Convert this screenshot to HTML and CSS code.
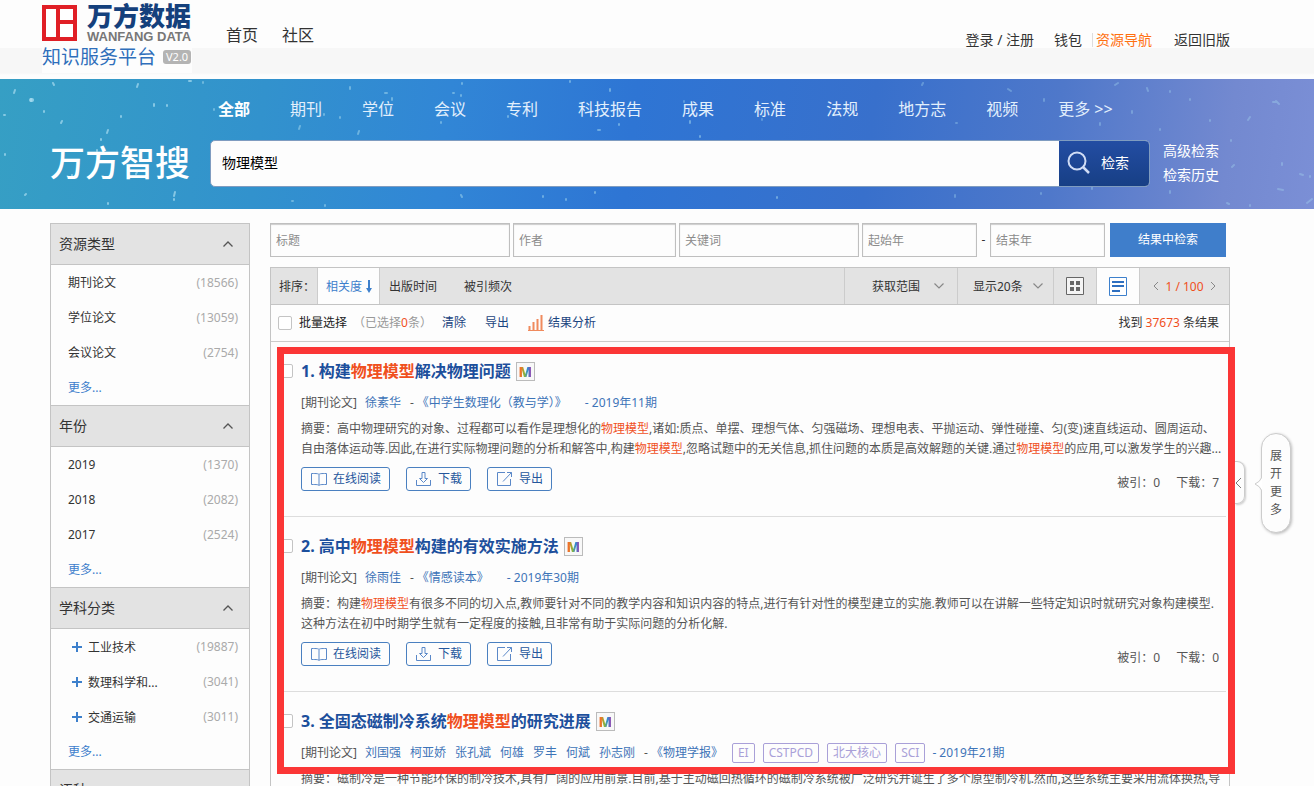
FILE: index.html
```html
<!DOCTYPE html>
<html lang="zh-CN">
<head>
<meta charset="utf-8">
<title>万方数据知识服务平台</title>
<link rel="stylesheet" href="styles.css">
</head>
<body>
<svg class="sprite" aria-hidden="true">
  <symbol id="up" viewBox="0 0 12 8"><path d="M1.500 6.500 6 2l4.500 4.500" fill="none" stroke="#555" stroke-width="1.300"/></symbol>
  <symbol id="down" viewBox="0 0 12 8"><path d="M1.500 1.500 6 6l4.500-4.500" fill="none" stroke="currentColor" stroke-width="1.200"/></symbol>
  <symbol id="book" viewBox="0 0 18 16"><path d="M9 3.500C8 2.500 7 2.500 1.500 2.500v11c5.500 0 6.500 0 7.500 1 1-1 2-1 7.500-1v-11C11 2.500 10 2.500 9 3.500zM9 3.500v11" fill="none" stroke="currentColor"/></symbol>
  <symbol id="save" viewBox="0 0 18 16"><path d="M1.500 9v5.500h14V9M7 1.500h3v6h2.500l-4 4-4-4H7z" fill="none" stroke="currentColor"/></symbol>
  <symbol id="share" viewBox="0 0 18 16"><path d="M9 1.500H1.500v13h13V8M11 1.500h4.500V6M15.500 1.500l-8.500 9" fill="none" stroke="currentColor"/></symbol>
</svg>

<header class="top">
  <a class="logo" href="#">
    <span class="logo-row">
      <svg width="35" height="36" viewBox="0 0 35 36"><path fill="#e01f26" d="M0 0h35v36H0z"/><path fill="#fff" d="M4 4h10v28H4zM18 4h13v11H18zM18 19h13v13H18z"/></svg>
      <span class="logo-name"><span class="logo-cn">万方数据</span><span class="logo-en">WANFANG DATA</span></span>
    </span>
    <span class="logo-row logo-sub">知识服务平台<span class="version">V2.0</span></span>
  </a>
  <nav class="site-nav"><a href="#">首页</a><a href="#">社区</a></nav>
  <nav class="user-nav"><a href="#">登录 / 注册</a><a href="#">钱包</a><a class="nav-guide" href="#">资源导航</a><a href="#">返回旧版</a></nav>
</header>

<section class="banner">
  <svg class="stars" viewBox="0 0 1314 130" preserveAspectRatio="none" aria-hidden="true">
    <g stroke="#a8dcf0" stroke-linecap="round" stroke-width="2" fill="none">
      <path opacity=".7" d="M15 11l-1 3M53 4l1 2M31 20v2M4 36h1M44 32v1M138 5l-1 3M189 2h2M154 25v2M121 37v1M62 42l-1 2M167 26v1M108 51l-1 3M101 60v1M97 71v1M25 116l1-1M175 113l-1 4M174 120v1M108 124v1M5 75v1M137 93l-1 2M72 96v1"/>
      <path stroke-width="4" opacity=".8" d="M31 21l1 0"/>
      <path opacity=".5" d="M203 3v1M214 30v1M300 47l-1 3M350 8v2M359 52l-1 3M385 14h2M392 19v2M324 35v1M369 30v1M462 4v1M453 14h1M441 43v1M461 16v1M570 2v1M610 10v2M598 51h2M619 45v1M690 42v2M700 57v1M461 116l1 2M325 126v1M292 122h1M566 120v1M595 113v1M777 118v1M543 117v1M508 37v1M340 38v1"/>
      <path opacity=".35" d="M684 22v1M762 40v1M923 4l-1 2M956 44h1M1008 10l3 2M1044 20v2M1118 4l-3 2M1170 12v1M1147 9l1 3M1132 32v2M1100 44v2M1210 41v1M1231 61v1M1234 86l-2 2M1273 23h3M1276 22l3 3M1250 38l-2 3M1282 84v2M1300 95l3 1M1278 110l5 1M1307 124l5-4M1227 124l2 1M1092 108v2M1170 112v2M955 116v2M1250 126v1M1041 114v1M1310 97v1M1190 20v1M1160 50v1"/>
    </g>
  </svg>
  <div class="banner-inner">
    <nav class="tabs"><a class="on" href="#">全部</a><a href="#">期刊</a><a href="#">学位</a><a href="#">会议</a><a href="#">专利</a><a href="#">科技报告</a><a href="#">成果</a><a href="#">标准</a><a href="#">法规</a><a href="#">地方志</a><a href="#">视频</a><a href="#">更多 &gt;&gt;</a></nav>
    <div class="search-row">
      <h1 class="search-title">万方智搜</h1>
      <form class="search-box">
        <input class="search-input" type="text" value="物理模型" aria-label="检索词">
        <button class="search-btn" type="button"><svg width="24" height="24" viewBox="0 0 24 24"><circle cx="10" cy="10" r="8.500" fill="none" stroke="#cfdcf5" stroke-width="2"/><path d="M16 16l6 6" stroke="#cfdcf5" stroke-width="2.500"/></svg>检索</button>
      </form>
      <div class="search-links"><a href="#">高级检索</a><a href="#">检索历史</a></div>
    </div>
  </div>
</section>

<div class="content">
  <aside class="side">
    <h2 class="side-head">资源类型<svg width="12" height="8"><use href="#up"/></svg></h2>
    <ul class="side-list">
      <li><a href="#">期刊论文</a><span class="count">(18566)</span></li>
      <li><a href="#">学位论文</a><span class="count">(13059)</span></li>
      <li><a href="#">会议论文</a><span class="count">(2754)</span></li>
      <li><a class="more" href="#">更多...</a></li>
    </ul>
    <h2 class="side-head">年份<svg width="12" height="8"><use href="#up"/></svg></h2>
    <ul class="side-list">
      <li><a href="#">2019</a><span class="count">(1370)</span></li>
      <li><a href="#">2018</a><span class="count">(2082)</span></li>
      <li><a href="#">2017</a><span class="count">(2524)</span></li>
      <li><a class="more" href="#">更多...</a></li>
    </ul>
    <h2 class="side-head">学科分类<svg width="12" height="8"><use href="#up"/></svg></h2>
    <ul class="side-list">
      <li><a class="branch" href="#"><svg width="11" height="11"><path d="M5 0v10M0 5h10" stroke="#3d80cc" stroke-width="2"/></svg>工业技术</a><span class="count">(19887)</span></li>
      <li><a class="branch" href="#"><svg width="11" height="11"><path d="M5 0v10M0 5h10" stroke="#3d80cc" stroke-width="2"/></svg>数理科学和...</a><span class="count">(3041)</span></li>
      <li><a class="branch" href="#"><svg width="11" height="11"><path d="M5 0v10M0 5h10" stroke="#3d80cc" stroke-width="2"/></svg>交通运输</a><span class="count">(3011)</span></li>
      <li><a class="more" href="#">更多...</a></li>
    </ul>
    <h2 class="side-head">语种<svg width="12" height="8"><use href="#up"/></svg></h2>
  </aside>

  <main class="main">
    <form class="filters">
      <input type="text" placeholder="标题" aria-label="标题">
      <input type="text" placeholder="作者" aria-label="作者">
      <input type="text" placeholder="关键词" aria-label="关键词">
      <input type="text" placeholder="起始年" aria-label="起始年">
      <span class="dash">-</span>
      <input type="text" placeholder="结束年" aria-label="结束年">
      <button type="button">结果中检索</button>
    </form>

    <div class="panel">
      <div class="sortbar">
        <span class="sort-label">排序：</span>
        <a class="sort on" href="#">相关度<svg width="8" height="13" viewBox="0 0 8 13"><path d="M4 0v10" stroke="#3d80cc" stroke-width="2"/><path d="M1 8h6l-3 5z" fill="#3d80cc"/></svg></a>
        <a class="sort" href="#">出版时间</a>
        <a class="sort sort-last" href="#">被引频次</a>
        <label class="pick pick-range"><select aria-label="获取范围"><option>获取范围</option></select><svg width="12" height="8"><use href="#down"/></svg></label>
        <label class="pick"><select aria-label="显示条数"><option>显示20条</option></select><svg width="12" height="8"><use href="#down"/></svg></label>
        <button class="view" type="button" aria-label="网格"><svg width="18" height="18"><path d="M.5.5h17v17H.5z" fill="#f4f4f4" stroke="#666"/><path d="M4 4h4v4H4zM10 4h4v4h-4zM4 10h4v4H4zM10 10h4v4h-4z" fill="#666"/></svg></button>
        <button class="view on" type="button" aria-label="列表"><svg width="18" height="19"><path d="M.5.5h17v18H.5z" fill="#fff" stroke="#3d80cc"/><path d="M3 5h12M3 9h12M3 14h8" stroke="#2e6fc0" stroke-width="2"/></svg></button>
        <div class="pager"><button type="button" aria-label="上一页"><svg width="6" height="10"><path d="M5 1 1 5l4 4" fill="none" stroke="#888"/></svg></button><span>1 / 100</span><button type="button" aria-label="下一页"><svg width="6" height="10"><path d="M1 1l4 4-4 4" fill="none" stroke="#888"/></svg></button></div>
      </div>
      <div class="batch">
        <label class="batch-all"><input type="checkbox">批量选择</label>
        <span class="picked">（已选择<b>0</b>条）</span>
        <a href="#">清除</a>
        <a href="#">导出</a>
        <a class="analyse" href="#"><svg width="16" height="16"><path d="M1.500 11v4M5.500 7v8M9.500 4v11M13.500 0v15" stroke="#f08a5d" stroke-width="2"/><path d="M0 15.500h16" stroke="#f08a5d"/></svg>结果分析</a>
        <span class="total">找到 <b>37673</b> 条结果</span>
      </div>

      <div class="results-wrap">
        <ol class="results">
          <li>
            <input type="checkbox" aria-label="选择第1条">
            <article>
              <h3><a href="#">1. 构建<em>物理模型</em>解决物理问题</a><span class="m-badge"><span>M</span></span></h3>
              <p class="meta"><span class="kind">[期刊论文]</span><a href="#">徐素华</a><span class="sep">-</span><a class="journal" href="#">《中学生数理化（教与学）》</a><a href="#">- 2019年11期</a></p>
              <p class="abstract">摘要：高中物理研究的对象、过程都可以看作是理想化的<em>物理模型</em>,诸如:质点、单摆、理想气体、匀强磁场、理想电表、平抛运动、弹性碰撞、匀(变)速直线运动、圆周运动、<br>自由落体运动等.因此,在进行实际物理问题的分析和解答中,构建<em>物理模型</em>,忽略试题中的无关信息,抓住问题的本质是高效解题的关键.通过<em>物理模型</em>的应用,可以激发学生的兴趣...</p>
              <div class="actions">
                <button type="button"><svg width="18" height="16"><use href="#book"/></svg>在线阅读</button>
                <button type="button"><svg width="18" height="16"><use href="#save"/></svg>下载</button>
                <button type="button"><svg width="18" height="16"><use href="#share"/></svg>导出</button>
                <span class="stats"><span>被引：0</span><span>下载：7</span></span>
              </div>
            </article>
          </li>
          <li>
            <input type="checkbox" aria-label="选择第2条">
            <article>
              <h3><a href="#">2. 高中<em>物理模型</em>构建的有效实施方法</a><span class="m-badge"><span>M</span></span></h3>
              <p class="meta"><span class="kind">[期刊论文]</span><a href="#">徐雨佳</a><span class="sep">-</span><a class="journal" href="#">《情感读本》</a><a href="#">- 2019年30期</a></p>
              <p class="abstract">摘要：构建<em>物理模型</em>有很多不同的切入点,教师要针对不同的教学内容和知识内容的特点,进行有针对性的模型建立的实施.教师可以在讲解一些特定知识时就研究对象构建模型.<br>这种方法在初中时期学生就有一定程度的接触,且非常有助于实际问题的分析化解.</p>
              <div class="actions">
                <button type="button"><svg width="18" height="16"><use href="#book"/></svg>在线阅读</button>
                <button type="button"><svg width="18" height="16"><use href="#save"/></svg>下载</button>
                <button type="button"><svg width="18" height="16"><use href="#share"/></svg>导出</button>
                <span class="stats"><span>被引：0</span><span>下载：0</span></span>
              </div>
            </article>
          </li>
          <li>
            <input type="checkbox" aria-label="选择第3条">
            <article>
              <h3><a href="#">3. 全固态磁制冷系统<em>物理模型</em>的研究进展</a><span class="m-badge"><span>M</span></span></h3>
              <p class="meta"><span class="kind">[期刊论文]</span><span class="authors"><a href="#">刘国强</a><a href="#">柯亚娇</a><a href="#">张孔斌</a><a href="#">何雄</a><a href="#">罗丰</a><a href="#">何斌</a><a href="#">孙志刚</a></span><span class="sep">-</span><a href="#">《物理学报》</a><span class="tags"><span>EI</span><span>CSTPCD</span><span>北大核心</span><span>SCI</span></span><a href="#">- 2019年21期</a></p>
              <p class="abstract">摘要：磁制冷是一种节能环保的制冷技术,具有广阔的应用前景.目前,基于主动磁回热循环的磁制冷系统被广泛研究并诞生了多个原型制冷机.然而,这些系统主要采用流体换热,导</p>
            </article>
          </li>
        </ol>
        <div class="frame"></div>
        <button class="handle" type="button" aria-label="收起"><svg width="8" height="12"><path d="M6 1 1 6l5 5" fill="none" stroke="#777"/></svg></button>
      </div>
    </div>
  </main>
</div>

<aside class="bubble"><svg width="8" height="16" viewBox="0 0 8 16"><path d="M8 1Q6 6 1 8q5 2 7 7" fill="#fff" stroke="#ccc"/></svg><span>展</span><span>开</span><span>更</span><span>多</span></aside>
</body>
</html>
```

FILE: styles.css
```css
* { box-sizing: border-box; }
body {
  margin: 0;
  height: 100vh;
  overflow: hidden;
  position: relative;
  background: #fdfdfd;
  color: #333;
  font: 12px/20px "Noto Sans", "Noto Sans CJK SC", sans-serif;
}
a { color: inherit; text-decoration: none; }
h1, h2, h3, p, ul, ol { margin: 0; padding: 0; font-weight: 400; }
ul, ol { list-style: none; }
em, b { font-style: normal; font-weight: inherit; color: #f0501e; }
button, input, select { font: inherit; color: inherit; margin: 0; }
button { padding: 0; border: 0; background: none; white-space: nowrap; }
svg { flex: none; }
.sprite { position: absolute; width: 0; height: 0; }

input[type="checkbox"] {
  appearance: none;
  width: 14px;
  height: 14px;
  border: 1px solid #c4c4c4;
  border-radius: 2px;
  background: #fff;
}

/* Header */
.top {
  display: flex;
  height: 79px;
  padding: 0 84px 0 42px;
  background: linear-gradient(#fdfdfd 48px, #f7f7f7 48px, #f7f7f7 73px, #fdfdfd 75px);
}
.logo { width: 150px; height: 73px; padding-top: 3px; background: #fdfdfd; }
.logo-row { display: flex; align-items: center; gap: 10px; }
.logo-name { display: flex; flex-direction: column; }
.logo-cn { font-size: 26px; line-height: 27px; font-weight: 900; color: #14407c; }
.logo-en { font: 700 13px/13px "Liberation Sans", sans-serif; color: #777; white-space: nowrap; }
.logo-sub { gap: 7px; font-size: 19px; line-height: 28px; color: #2f6fbb; white-space: nowrap; }
.version { padding: 0 3px; border-radius: 3px; background: #b4b4b4; color: #fff; font-size: 11px; line-height: 14px; }
.site-nav { display: flex; gap: 24px; padding: 23px 0 0 34px; font-size: 16px; line-height: 24px; }
.user-nav { display: flex; align-items: flex-start; gap: 20px; margin-left: auto; padding-top: 30px; font-size: 14px; }
.user-nav .nav-guide { display: flex; align-items: center; gap: 3px; margin-left: -10px; padding-right: 2px; color: #ff7010; }
.user-nav .nav-guide::before { content: ""; width: 1px; height: 14px; background: #ddd; }

/* Search banner */
.banner {
  position: relative;
  height: 130px;
  background: linear-gradient(97deg, #369fc4 0%, #3292cd 20%, #3186d6 34%, #2e75d4 48%, #3870cc 66%, #4f78ca 80%, #7389d0 93%, #7b8fd6 100%);
  color: #fff;
}
.stars { position: absolute; inset: 0; width: 100%; height: 100%; }
.banner-inner { position: relative; padding: 18px 84px 0 50px; }
.tabs { display: flex; gap: 40px; padding-left: 168px; font-size: 16px; line-height: 24px; color: #e2effc; white-space: nowrap; }
.tabs .on { font-weight: 700; color: #fff; }
.search-row { display: flex; align-items: center; margin-top: 18px; }
.search-title { width: 160px; font-size: 35px; line-height: 46px; font-weight: 500; }
.search-box { display: flex; flex: 1; height: 47px; border: 1px solid #7f9cc0; border-radius: 5px; background: #fdfdfd; overflow: hidden; }
.search-input { flex: 1; min-width: 0; padding: 0 11px; border: 0; background: none; color: #000; font-size: 14px; }
.search-btn { display: flex; align-items: center; gap: 10px; width: 90px; padding-left: 8px; background: linear-gradient(#234da3, #173f85); color: #fff; font-size: 14px; }
.search-links { display: flex; flex-direction: column; width: 80px; padding-left: 13px; font-size: 14px; line-height: 24px; }

/* Columns */
.content { display: grid; grid-template-columns: 200px minmax(0, 1fr); gap: 20px; padding: 14px 84px 0 50px; }

/* Facets */
.side { border: 1px solid #c4c4c4; border-top: 0; }
.side-head {
  display: flex;
  align-items: center;
  justify-content: space-between;
  height: 42px;
  padding: 0 15px 0 8px;
  border: 1px solid #c4c4c4;
  border-width: 1px 0;
  background: #e3e3e3;
  font-size: 14px;
}
.side-list li { display: flex; justify-content: space-between; height: 35px; padding: 0 11px 0 17px; line-height: 35px; }
.count { color: #aaa; }
.more { color: #3d80cc; }
.branch { display: flex; align-items: center; gap: 5px; padding: 2px 0 0 4px; }

/* Refine form */
.filters { display: grid; grid-template-columns: 240fr 163fr 180fr 115fr 7px 115fr 118px; gap: 3px; height: 34px; margin-right: 4px; }
.filters input { min-width: 0; padding: 2px 5px 0; border: 1px solid #bfbfbf; background: #fdfdfd; box-shadow: inset 0 1px 1px #ccc; }
.filters input::placeholder { color: #8c8c8c; }
.filters button { margin-left: 2px; background: #3f7ecb; color: #fff; }
.dash { line-height: 34px; text-align: center; }

/* Result panel */
.panel { margin-top: 10px; border: 1px solid #c4c4c4; border-bottom: 0; }
.sortbar { display: flex; align-items: stretch; height: 37px; border-bottom: 1px solid #c4c4c4; background: #e3e3e3; line-height: 37px; white-space: nowrap; }
.sort-label { width: 47px; padding-left: 8px; border-right: 1px solid #ccc; }
.sort { padding: 0 18px 0 9px; }
.sort.on { display: flex; align-items: center; gap: 3px; padding: 0 6px 0 8px; border-right: 1px solid #ccc; background: #fdfdfd; color: #3d80cc; }
.sort-last { margin-right: auto; }
.pick { display: flex; align-items: center; gap: 9px; padding: 0 9px 0 15px; border-left: 1px solid #ccc; color: #888; }
.pick-range { gap: 12px; padding: 0 12px 0 27px; }
.pick select { appearance: none; padding: 0; border: 0; background: none; color: #333; }
.view { display: grid; place-items: center; width: 43px; border-left: 1px solid #ccc; }
.view.on { background: #fdfdfd; }
.pager { display: flex; align-items: center; justify-content: center; gap: 6px; width: 90px; border-left: 1px solid #ccc; color: #f0501e; }
.pager button { display: flex; }

.batch { display: flex; align-items: center; height: 37px; padding: 0 10px 0 7px; border-bottom: 1px solid #ccc; white-space: nowrap; }
.batch a { margin-right: 19px; color: #1c4580; }
.batch-all { display: flex; align-items: center; gap: 7px; color: #222; }
.picked { margin: 0 10px 0 6px; color: #999; }
.analyse { display: flex; align-items: center; gap: 4px; }
.total { margin-left: auto; }

.results-wrap { position: relative; }
.results { margin: 0 3px 0 8px; }
.results li { display: grid; grid-template-columns: 14px minmax(0, 1fr); gap: 8px; height: 175px; padding: 17px 7px 0 0; border-bottom: 1px solid #ddd; }
.results li > input { margin-top: 5px; }
.results h3 { display: flex; align-items: center; gap: 5px; font-size: 16px; line-height: 24px; font-weight: 700; color: #1c4f9c; }
.m-badge { display: grid; place-items: center; width: 19px; height: 19px; border: 1px solid #bbb; background: #f8f8f8; font-size: 14px; line-height: 17px; font-weight: 900; }
.m-badge span { background: linear-gradient(90deg, #f0702a 15%, #8fb833 40%, #2f8fd0 65%, #8a4ab0 90%); background-clip: text; color: transparent; }
.meta { display: flex; align-items: center; height: 20px; margin-top: 10px; color: #3d74b8; white-space: nowrap; }
.kind { margin-right: 8px; color: #555; }
.sep { margin: 0 3px 0 9px; color: #555; }
.journal { margin-right: 18px; }
.authors { display: flex; gap: 9px; }
.tags { display: flex; gap: 8px; margin: 0 7px 0 9px; color: #a9a0d8; line-height: 18px; }
.tags span { padding: 0 5px; border: 1px solid #a9a0d8; border-radius: 2px; }
.abstract { margin-top: 6px; color: #555; white-space: nowrap; }
.actions { display: flex; gap: 16px; margin-top: 8px; }
.actions button { display: flex; align-items: center; gap: 5px; height: 24px; padding: 0 8px; border: 1px solid #4a80c0; border-radius: 3px; color: #25569c; }
.actions svg { color: #5a88c8; }
.stats { display: flex; gap: 16px; margin-left: auto; padding-top: 6px; color: #555; }

/* Highlight frame and floating controls */
.frame { position: absolute; top: 5px; left: 6px; right: -6px; height: 427px; border: 7px solid #fb3636; pointer-events: none; }
.handle { position: absolute; top: 119px; right: -16px; width: 10px; height: 43px; border: 1px solid #ccc; border-left: 0; border-radius: 0 8px 8px 0; box-shadow: 1px 1px 2px #ccc; display: flex; align-items: center; }
.bubble {
  position: absolute;
  top: 433px;
  right: 23px;
  display: flex;
  flex-direction: column;
  align-items: center;
  width: 30px;
  padding: 13px 0;
  border: 1px solid #ccc;
  border-radius: 15px;
  background: #fdfdfd;
  box-shadow: 1px 1px 3px #bbb;
  color: #555;
  line-height: 18px;
}
.bubble svg { position: absolute; left: -8px; top: 42px; }
```
